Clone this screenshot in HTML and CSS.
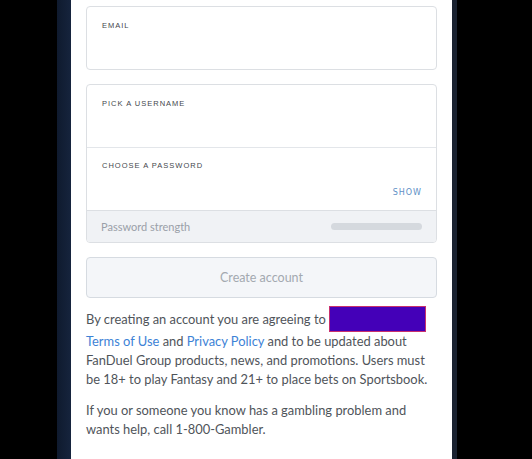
FILE: index.html
```html
<!DOCTYPE html>
<html>
<head>
<meta charset="utf-8">
<link rel="stylesheet" href="styles.css">
</head>
<body>
<div class="stage">
  <div class="strip-left"></div>
  <div class="panel">
    <div class="field email">
      <div class="label">EMAIL</div>
    </div>
    <div class="group">
      <div class="field user">
        <div class="label">PICK A USERNAME</div>
      </div>
      <div class="field pass">
        <div class="label">CHOOSE A PASSWORD</div>
        <div class="show">SHOW</div>
      </div>
      <div class="strength">
        <span>Password strength</span>
        <div class="bar"></div>
      </div>
    </div>
    <div class="btn">Create account</div>
    <p class="copy">By creating an account you are agreeing to <span class="redact"></span><br><a>Terms of Use</a> and <a>Privacy Policy</a> and to be updated about FanDuel Group products, news, and promotions. Users must be 18+ to play Fantasy and 21+ to place bets on Sportsbook.</p>
    <p class="copy second">If you or someone you know has a gambling problem and wants help, call 1-800-Gambler.</p>
  </div>
  <div class="strip-right"></div>
</div>
</body>
</html>
```
FILE: styles.css
```css
html, body {
  margin: 0;
  padding: 0;
  background: #000;
}
body {
  width: 532px;
  height: 459px;
  overflow: hidden;
  font-family: "Lato", "Open Sans", sans-serif;
}
.stage {
  display: flex;
  height: 459px;
  padding-left: 57px;
}
.strip-left {
  width: 14px;
  background: linear-gradient(90deg, #0f1a2e, #16243d);
}
.panel {
  width: 381px;
  background: #fff;
  box-sizing: border-box;
  padding: 6px 15px 0 15px;
  display: flex;
  flex-direction: column;
}
.strip-right {
  width: 5px;
  background: #1a2230;
}
.field {
  position: relative;
  box-sizing: border-box;
  padding: 14px 15px 0;
}
.email {
  height: 64px;
  border: 1px solid #dcdfe3;
  border-radius: 4px;
}
.label {
  font-family: "Liberation Sans", sans-serif;
  font-size: 7.5px;
  letter-spacing: 1px;
  color: #44474c;
  line-height: 10px;
}
.group {
  margin-top: 14px;
  border: 1px solid #dcdfe3;
  border-radius: 4px;
  overflow: hidden;
}
.user {
  height: 63px;
  padding-top: 14px;
  border-bottom: 1px solid #e3e6ea;
}
.pass {
  height: 62px;
  padding-top: 13px;
}
.show {
  position: absolute;
  right: 14px;
  bottom: 13px;
  font-family: "DejaVu Sans", sans-serif;
  font-size: 8px;
  letter-spacing: 1px;
  color: #5c8fc6;
}
.strength {
  height: 31px;
  background: #f0f2f5;
  border-top: 1px solid #dcdfe3;
  display: flex;
  align-items: center;
  justify-content: space-between;
  padding: 0 14px 0 14px;
  font-size: 11px;
  color: #9aa0a8;
}
.bar {
  width: 91px;
  height: 7px;
  border-radius: 4px;
  background: #d5d9de;
}
.btn {
  margin-top: 14px;
  height: 41px;
  box-sizing: border-box;
  border: 1px solid #d6dbe1;
  border-radius: 4px;
  background: #f4f6f9;
  color: #a3a9b0;
  font-size: 12.5px;
  display: flex;
  align-items: center;
  justify-content: center;
}
.copy {
  margin: 12px 0 0;
  font-size: 12.9px;
  line-height: 19px;
  color: #4f545a;
}
.copy a {
  color: #3d82d6;
}
.second {
  margin-top: 12px;
}
.redact {
  display: inline-block;
  width: 97px;
  height: 26px;
  box-sizing: border-box;
  background: #4400b8;
  border: 1px solid #c8306e;
  vertical-align: -8px;
  margin-top: -8px;
}
```
